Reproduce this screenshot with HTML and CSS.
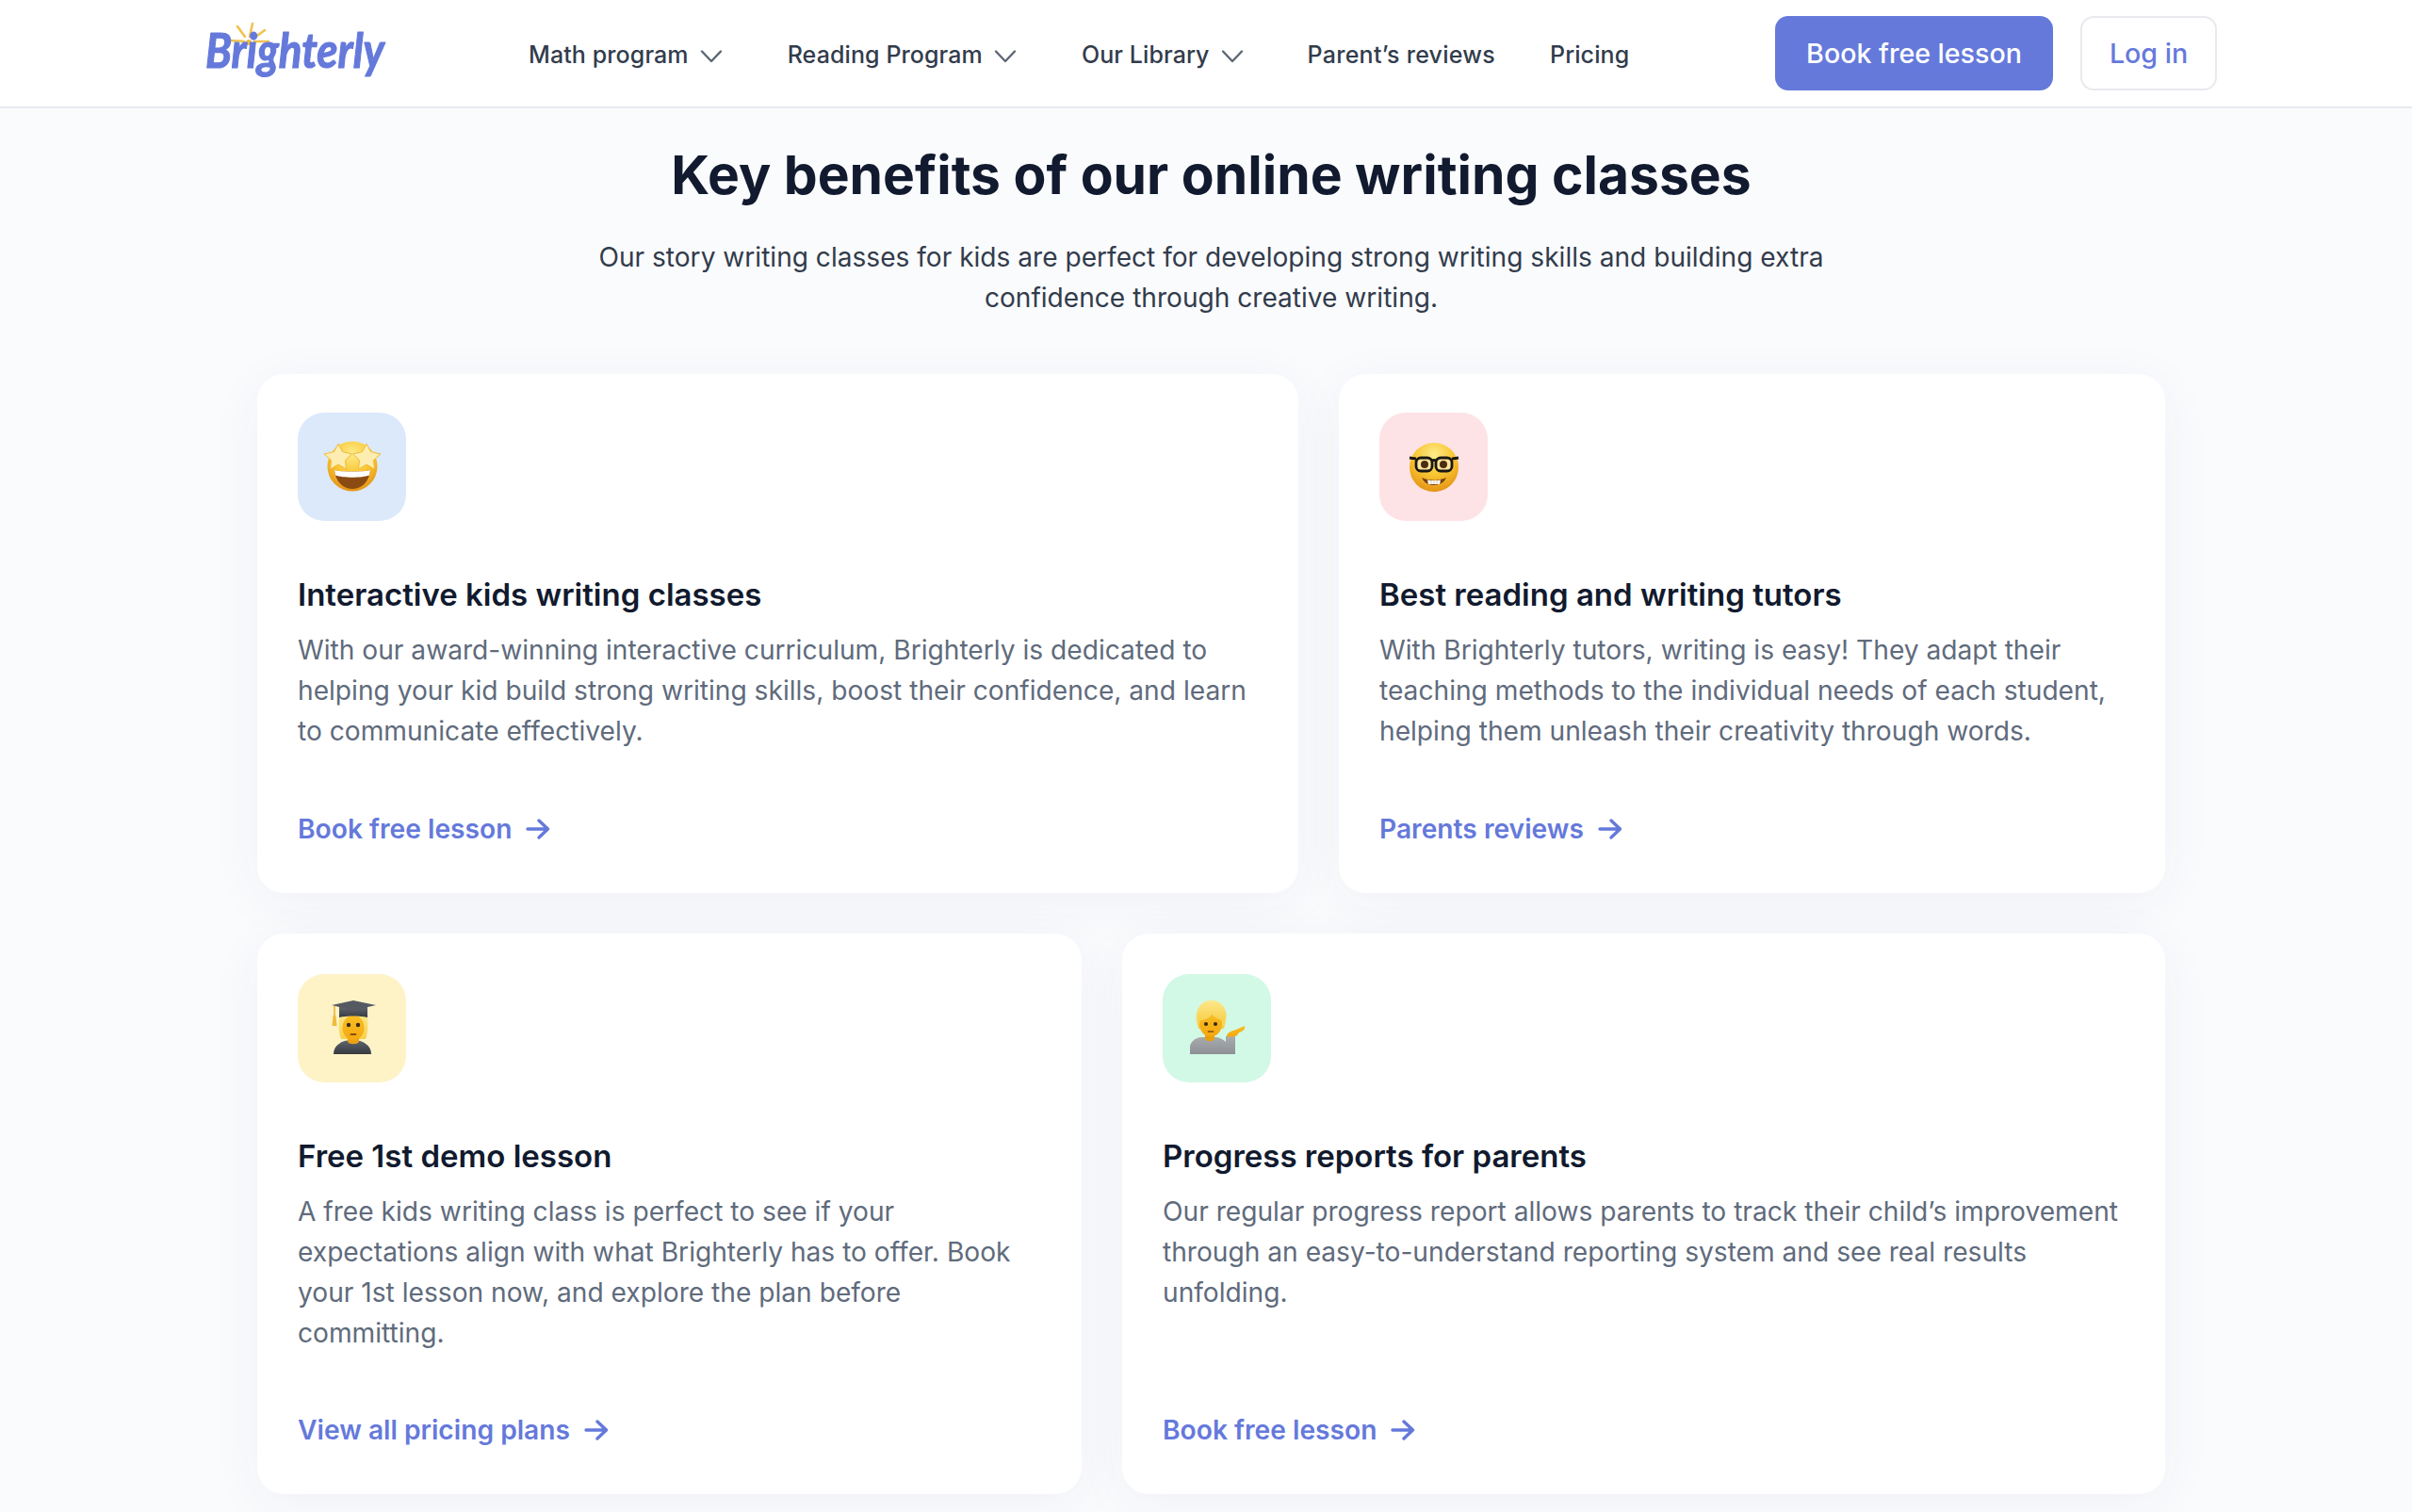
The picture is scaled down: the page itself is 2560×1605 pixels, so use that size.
FILE: index.html
```html
<!DOCTYPE html>
<html lang="en">
<head>
<meta charset="utf-8">
<title>Brighterly</title>
<link rel="stylesheet" href="styles.css">
</head>
<body>
<svg class="defs" width="0" height="0" aria-hidden="true">
  <defs>
    <radialGradient id="face" cx="50%" cy="25%" r="80%"><stop offset="0" stop-color="#fdeb8c"/><stop offset=".5" stop-color="#f9c631"/><stop offset="1" stop-color="#e28c12"/></radialGradient>
    <linearGradient id="skin" x1="0" y1="0" x2="0" y2="1"><stop offset="0" stop-color="#f9bf22"/><stop offset="1" stop-color="#f3a812"/></linearGradient>
    <linearGradient id="hair" x1="0" y1="0" x2="0" y2="1"><stop offset="0" stop-color="#fce88c"/><stop offset="1" stop-color="#f7d04a"/></linearGradient>
    <linearGradient id="grey" x1="0" y1="0" x2="0" y2="1"><stop offset="0" stop-color="#a9acaf"/><stop offset="1" stop-color="#8d9094"/></linearGradient>
    <linearGradient id="dark" x1="0" y1="0" x2="0" y2="1"><stop offset="0" stop-color="#60656d"/><stop offset="1" stop-color="#363a41"/></linearGradient>
    <symbol id="chev" viewBox="0 0 24 24"><path d="M2 6.500l10 10.500 10-10.500" fill="none" stroke="#5d6874" stroke-width="2.400" stroke-linecap="round" stroke-linejoin="round"/></symbol>
    <symbol id="arrow" viewBox="0 0 26 24"><path d="M2 12h21M14 3l9.500 9-9.500 9" fill="none" stroke="#6579db" stroke-width="3.400" stroke-linecap="round" stroke-linejoin="round"/></symbol>
  </defs>
</svg>

<header class="topbar">
  <div class="topbar-inner">
    <a class="logo" href="#" aria-label="Brighterly">
      <svg class="logo-mark" viewBox="0 0 196 70" width="196" height="70">
        <g stroke="#f0c24f" stroke-width="2.600" stroke-linecap="round">
          <path d="M37 5l8 11M53 2l-3 14M66 9l-11 8M29 20l15 1M55 21h15"/>
        </g>
        <circle cx="49" cy="22" r="3" fill="#f0b93f"/>
        <text class="logo-word" x="3" y="49" textLength="190" lengthAdjust="spacingAndGlyphs">Brighterly</text>
      </svg>
    </a>
    <nav class="nav">
      <a class="nav-item nav-math" href="#">Math program <svg class="chev"><use href="#chev"/></svg></a>
      <a class="nav-item nav-read" href="#">Reading Program <svg class="chev"><use href="#chev"/></svg></a>
      <a class="nav-item nav-lib" href="#">Our Library <svg class="chev"><use href="#chev"/></svg></a>
      <a class="nav-item nav-rev" href="#">Parent’s reviews</a>
      <a class="nav-item" href="#">Pricing</a>
    </nav>
    <div class="actions">
      <a class="btn btn-primary" href="#">Book free lesson</a>
      <a class="btn btn-ghost" href="#">Log in</a>
    </div>
  </div>
</header>

<main class="section">
  <h1 class="title">Key benefits of our online writing classes</h1>
  <p class="lead">Our story writing classes for kids are perfect for developing strong writing skills and building extra<br>confidence through creative writing.</p>

  <div class="row row-a">
    <article class="card">
      <div class="badge badge-blue">
        <svg viewBox="0 0 60 60" width="60" height="60">
          <circle cx="30" cy="29" r="26.500" fill="url(#face)"/>
          <path d="M11 33c6 2 32 2 38 0-1 12-9 20-19 20S12 45 11 33z" fill="#8a4b12"/>
          <path d="M11 33c6 2 32 2 38 0l-1 5.500c-8 3-28 3-36 0z" fill="#fff"/>
          <path d="M15 5l4.500 8.500 10 2.500-7 6.500 1 9.500-8.500-5-8.500 5 1-9.500L0 16l10.500-2.500z" fill="#fdedb0" stroke="#f0bb36" stroke-width="1"/>
          <path d="M45 5l4.500 8.500L60 16l-7.500 6.500 1 9.500-8.500-5-8.500 5 1-9.500-7-6.500 10-2.500z" fill="#fdedb0" stroke="#f0bb36" stroke-width="1"/>
        </svg>
      </div>
      <h2 class="card-title">Interactive kids writing classes</h2>
      <p class="card-text">With our award-winning interactive curriculum, Brighterly is dedicated to<br>helping your kid build strong writing skills, boost their confidence, and learn<br>to communicate effectively.</p>
      <a class="card-link" href="#">Book free lesson <svg class="arrow"><use href="#arrow"/></svg></a>
    </article>
    <article class="card">
      <div class="badge badge-pink">
        <svg viewBox="0 0 60 60" width="60" height="60">
          <circle cx="30" cy="30" r="26" fill="url(#face)"/>
          <path d="M17 41c8 3.500 18 3.500 26 0-2 5-7 8-13 8s-11-3-13-8z" fill="#7c4210"/>
          <path d="M23 43.500c5 .8 9 .8 14 0l-1 4.500H24z" fill="#fff"/>
          <path d="M27 44v4M30 44v4M33 44v4" stroke="#cdbb98" stroke-width=".8"/>
          <rect x="11" y="20" width="17" height="14" rx="5" fill="#fbe59a" stroke="#1b1712" stroke-width="2.800"/>
          <rect x="32" y="20" width="17" height="14" rx="5" fill="#fbe59a" stroke="#1b1712" stroke-width="2.800"/>
          <path d="M4 20l7 1M28 23c1.500-1 2.500-1 4 0M49 21l7-1" stroke="#1b1712" stroke-width="2.800" fill="none"/>
          <circle cx="20" cy="27" r="4" fill="#4b2d10"/>
          <circle cx="40" cy="27" r="4" fill="#4b2d10"/>
        </svg>
      </div>
      <h2 class="card-title">Best reading and writing tutors</h2>
      <p class="card-text">With Brighterly tutors, writing is easy! They adapt their<br>teaching methods to the individual needs of each student,<br>helping them unleash their creativity through words.</p>
      <a class="card-link" href="#">Parents reviews <svg class="arrow"><use href="#arrow"/></svg></a>
    </article>
  </div>

  <div class="row row-b">
    <article class="card">
      <div class="badge badge-yellow">
        <svg viewBox="0 0 60 60" width="60" height="60">
          <path d="M10 57c0-9 8-15 20-15s20 6 20 15z" fill="url(#dark)"/>
          <path d="M17 14h28c2 9 2 19-1 27H18c-3-8-3-18-1-27z" fill="url(#hair)"/>
          <path d="M25 38h12v6c-2 3-10 3-12 0z" fill="#eaa112"/>
          <ellipse cx="31" cy="29" rx="11.500" ry="13.500" fill="url(#skin)"/>
          <circle cx="26" cy="26" r="2.200" fill="#3a2a18"/>
          <circle cx="36" cy="26" r="2.200" fill="#3a2a18"/>
          <path d="M28.500 36h5" stroke="#8a4b12" stroke-width="1.800" stroke-linecap="round"/>
          <path d="M16 7h30v11c-9-2-21-2-30 0z" fill="url(#dark)"/>
          <path d="M31 0l24 5-24 5.500L8 5z" fill="#555a62"/>
          <path d="M11 6v12" stroke="#e3a91f" stroke-width="1.400"/>
          <path d="M9.500 16h3l1 11h-5z" fill="#f0bb3a"/>
        </svg>
      </div>
      <h2 class="card-title">Free 1st demo lesson</h2>
      <p class="card-text">A free kids writing class is perfect to see if your<br>expectations align with what Brighterly has to offer. Book<br>your 1st lesson now, and explore the plan before<br>committing.</p>
      <a class="card-link" href="#">View all pricing plans <svg class="arrow"><use href="#arrow"/></svg></a>
    </article>
    <article class="card">
      <div class="badge badge-green">
        <svg viewBox="0 0 60 60" width="60" height="60">
          <path d="M1 57V50c0-6 6-11 13-11h14c4 0 8 2 11 5l0-6h10v19z" fill="url(#grey)"/>
          <path d="M17 36h10v5c-2 3-8 3-10 0z" fill="#e89f10"/>
          <path d="M8 22C6 9 13 0 24 0s17 9 15 22l-2 8H10z" fill="url(#hair)"/>
          <ellipse cx="23" cy="25" rx="12" ry="13.500" fill="url(#skin)"/>
          <circle cx="18" cy="25" r="2.100" fill="#3a2a18"/>
          <circle cx="28" cy="25" r="2.100" fill="#3a2a18"/>
          <path d="M20.500 33h5" stroke="#8a4b12" stroke-width="1.700" stroke-linecap="round"/>
          <path d="M10 22c5-1 12-3 14-7 3 3 7 5 13 7 3-5 3-9 1-12C35 4 29 0 24 0 13 0 7 9 10 22z" fill="url(#hair)"/>
          <path d="M40 38c0-4 6-6 10-7l9-4c1 2-1 6-6 7l-2 3c-3 2-8 2-11 1z" fill="url(#skin)"/>
        </svg>
      </div>
      <h2 class="card-title">Progress reports for parents</h2>
      <p class="card-text">Our regular progress report allows parents to track their child’s improvement<br>through an easy-to-understand reporting system and see real results<br>unfolding.</p>
      <a class="card-link" href="#">Book free lesson <svg class="arrow"><use href="#arrow"/></svg></a>
    </article>
  </div>
</main>
</body>
</html>
```

FILE: styles.css
```css
* { box-sizing: border-box; }
html, body { margin: 0; padding: 0; }
body {
  height: 1605px;
  overflow: hidden;
  background: #fafbfd;
  font-family: Inter, "Noto Sans", sans-serif;
  color: #111a2e;
}
a { text-decoration: none; color: inherit; }
.defs { display: block; height: 0; }

.topbar {
  height: 115px;
  background: #fff;
  border-bottom: 2px solid #e8eaee;
}
.topbar-inner {
  display: flex;
  align-items: center;
  height: 113px;
  padding-left: 215px;
}
.logo { display: block; width: 346px; height: 70px; margin-top: 2px; }
.logo-mark { display: block; overflow: visible; }
.logo-word {
  font-family: Lato, sans-serif;
  font-style: italic;
  font-weight: 700;
  font-size: 52px;
  fill: #6579db;
  stroke: #6579db;
  stroke-width: 1.200;
  stroke-linejoin: round;
}

.nav { display: flex; align-items: center; margin-top: 3px; font-size: 25px; font-weight: 500; color: #323c4c; letter-spacing: .1px; }
.nav-item { display: flex; align-items: center; margin-right: 58px; white-space: nowrap; }
.nav-math { margin-right: 69px; }
.nav-read { margin-right: 69px; }
.nav-lib { margin-right: 68px; }
.nav-rev { margin-right: 58px; letter-spacing: .25px; }
.chev { width: 24px; height: 24px; margin-left: 12px; margin-top: 3px; }

.actions { display: flex; gap: 29px; position: absolute; left: 1884px; top: 17px; }
.btn {
  display: flex;
  align-items: center;
  justify-content: center;
  height: 79px;
  border-radius: 14px;
  font-size: 28.600px;
  font-weight: 500;
}
.btn-primary { width: 295px; background: #6579db; color: #fff; }
.btn-ghost { width: 145px; background: #fff; color: #6579db; border: 2px solid #e8eaee; }

.section { padding-top: 38px; }
.title {
  margin: 0 0 0 273px;
  width: 2025px;
  text-align: center;
  font-size: 57px;
  line-height: 66px;
  font-weight: 650;
  color: #111a2e;
}
.lead {
  margin: 33px 0 0 273px;
  width: 2025px;
  text-align: center;
  font-size: 28.100px;
  line-height: 43px;
  color: #323c4c;
}

.row { display: grid; gap: 43px; margin: 0 0 0 273px; width: 2025px; }
.row-a { grid-template-columns: 1105px 877px; margin-top: 59px; height: 551px; }
.row-b { grid-template-columns: 875px 1107px; margin-top: 43px; height: 595px; }

.card {
  display: flex;
  flex-direction: column;
  align-items: flex-start;
  padding: 41px 43px 48px;
  background: #fff;
  border-radius: 28px;
  box-shadow: 0 10px 56px rgba(30, 50, 100, .05);
}
.row-b .card { padding-top: 43px; }
.badge {
  display: flex;
  align-items: center;
  justify-content: center;
  width: 115px;
  height: 115px;
  border-radius: 28px;
}
.badge-blue { background: #dbe9fb; }
.badge-pink { background: #fde3e6; }
.badge-yellow { background: #fef3c7; }
.badge-green { background: #d2f8e6; }

.card-title {
  margin: 56px 0 0;
  font-size: 33px;
  line-height: 44px;
  font-weight: 600;
  color: #111a2e;
}
.card-text {
  margin: 15.500px 0 0;
  font-size: 28.150px;
  line-height: 43px;
  color: #5f6b7c;
}
.card-link {
  display: flex;
  align-items: center;
  margin-top: auto;
  font-size: 28.200px;
  line-height: 40px;
  font-weight: 600;
  color: #6579db;
}
.arrow { width: 26px; height: 24px; margin-left: 15px; }
```
